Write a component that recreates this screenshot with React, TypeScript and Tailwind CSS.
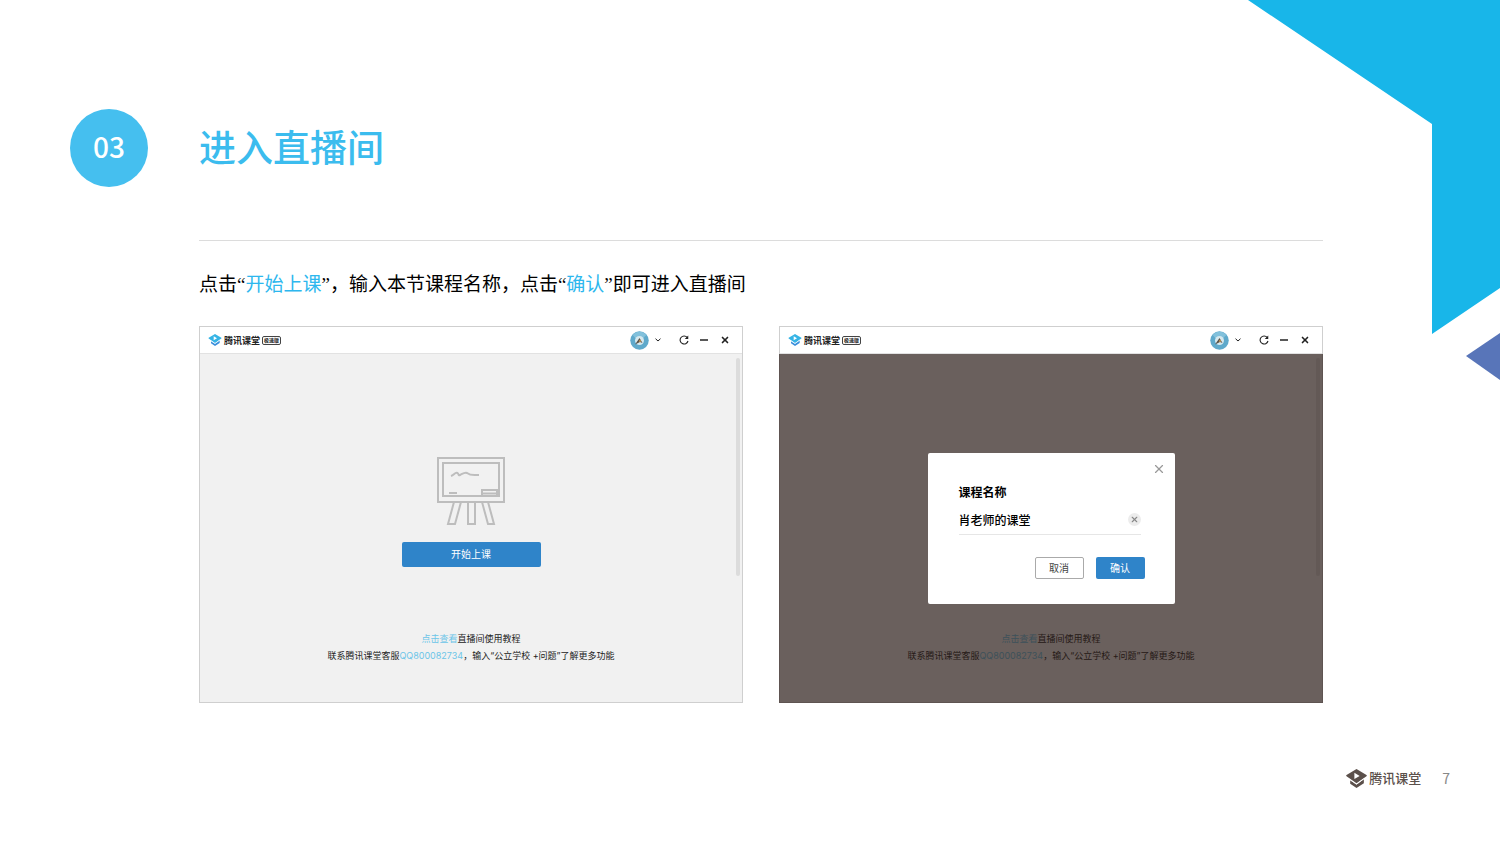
import React from "react";
import { X } from "lucide-react";

type LogoProps = {
  className?: string;
  top: string;
  bottom: string;
};

const Logo: React.FC<LogoProps> = ({ className, top, bottom }) => (
  <svg viewBox="0 0 40 36" className={className} aria-hidden="true">
    <path
      d="M20 0 L39 11.5 Q40.500 12.500 39 13.500 L20 27 L1 13.500 Q-0.500 12.500 1 11.500 Z"
      fill={top}
    />
    <path d="M16 7 L26 13 L16 19 Z" fill="#fff" />
    <path
      d="M8 21.500 L20 29.500 L34 19.500 V27 L20 36 L8 28 Z"
      fill={bottom}
    />
    <path d="M5 18.500 L20 29 L34 18.500" stroke="#fff" strokeWidth="1.500" fill="none" />
  </svg>
);

const Board: React.FC = () => (
  <svg
    viewBox="0 0 68 69"
    className="h-[69px] w-[68px] shrink-0"
    fill="none"
    stroke="#bdbdbd"
    strokeWidth="2"
    aria-hidden="true"
  >
    <rect x="1" y="1" width="66" height="44" />
    <rect x="6" y="6" width="56" height="33" />
    <path d="M14 19 C17 18 18 15 20.500 16 C22 17 21 19 23 18 C26 16.500 28 15 30 16 C34 19 36 18 42 18" />
    <path d="M12 36 H20" />
    <path d="M45 39 V33 H60 V39 M45 36.500 H60" />
    <path d="M17 45 L11 67 H18 L24 45" />
    <path d="M31 45 V67 H38 V45" />
    <path d="M45 45 L51 67 H57 L51 45" />
  </svg>
);

const Avatar: React.FC = () => (
  <svg viewBox="0 0 38 38" className="h-[19px] w-[19px]" aria-hidden="true">
    <circle cx="19" cy="19" r="18.500" fill="#5fa9cb" />
    <path d="M5 8 A18 18 0 0 1 33 8 L26 14 H11 Z" fill="#82c1dc" />
    <circle cx="19" cy="19" r="9" fill="#d5e8ee" />
    <path d="M19 14 L25 24 L20 22 L10 27 Z" fill="#5b5248" />
    <circle cx="20" cy="20" r="2" fill="#c59a55" />
  </svg>
);

const TitleBar: React.FC = () => (
  <div className="flex h-[27px] shrink-0 items-center justify-between border-b border-[#e2e2e2] bg-white pr-3 pl-2 text-[#222]">
    <div className="flex items-center gap-[2px]">
      <Logo className="h-3 w-[14px]" top="#35b4e5" bottom="#3a8fdc" />
      <span className="text-[9px] leading-none font-bold">腾讯课堂</span>
      <span className="rounded-[2px] border border-[#444] px-px text-[5px] leading-[7px] font-bold">
        极速版
      </span>
    </div>
    <div className="flex items-center">
      <button aria-label="账号" className="flex items-center gap-[6px]">
        <Avatar />
        <svg viewBox="0 0 6 4" className="h-1 w-[6px]" fill="none" stroke="currentColor" aria-hidden="true">
          <path d="M0.500 0.700 L3 3 L5.500 0.700" />
        </svg>
      </button>
      <button aria-label="刷新" className="ml-[18px]">
        <svg viewBox="0 0 20 20" className="h-[10px] w-[10px]" fill="none" aria-hidden="true">
          <path d="M16.500 5 A8 8 0 1 0 18 12" stroke="currentColor" strokeWidth="2.200" />
          <path d="M18.500 1 V8 H11.500 Z" fill="currentColor" />
        </svg>
      </button>
      <button aria-label="最小化" className="ml-[11px]">
        <svg viewBox="0 0 8 8" className="h-2 w-2" stroke="currentColor" strokeWidth="1.500" aria-hidden="true">
          <path d="M0 4 H8" />
        </svg>
      </button>
      <button aria-label="关闭" className="ml-3">
        <X size={10} strokeWidth={4} />
      </button>
    </div>
  </div>
);

const StartPage: React.FC = () => (
  <div className="flex flex-col items-center pt-[103px] pb-[38px]">
    <Board />
    <button className="mt-4 h-[25px] w-[139px] rounded-[2px] bg-[#2f84c9] text-[10px] text-white">
      开始上课
    </button>
    <div className="mt-[63px] text-center text-[9px] leading-[17px] text-[#222]">
      <p>
        <a href="#guide" className="text-[#6cc5e8]">
          点击查看
        </a>
        直播间使用教程
      </p>
      <p>
        联系腾讯课堂客服
        <a href="#qq" className="text-[#6cc5e8]">
          QQ800082734
        </a>
        ，输入“公立学校 +问题”了解更多功能
      </p>
    </div>
  </div>
);

const NameDialog: React.FC = () => (
  <div
    role="dialog"
    aria-label="课程名称"
    className="relative w-[247px] rounded-[2px] bg-white pt-[31px] pr-[30px] pb-[25px] pl-[31px] text-black"
  >
    <button aria-label="关闭" className="absolute top-[9px] right-[9px] text-[#999]">
      <X size={14} strokeWidth={2} />
    </button>
    <label htmlFor="course" className="block text-[12px] leading-[18px] font-bold">
      课程名称
    </label>
    <div className="mt-1 mr-1 flex items-center border-b border-[#e6e6e6] pb-[2px]">
      <input
        id="course"
        defaultValue="肖老师的课堂"
        className="h-[26px] min-w-0 flex-1 text-[12px] font-medium outline-none"
      />
      <button
        aria-label="清空"
        className="flex h-[13px] w-[13px] items-center justify-center rounded-full bg-[#ececec] text-[#888]"
      >
        <X size={9} strokeWidth={3} />
      </button>
    </div>
    <div className="mt-[22px] flex justify-end gap-3 text-[10px]">
      <button className="h-[22px] w-[49px] rounded-[2px] border border-[#aaa] text-[#444]">
        取消
      </button>
      <button className="h-[22px] w-[49px] rounded-[2px] bg-[#2f84c9] text-white">
        确认
      </button>
    </div>
  </div>
);

const AppWindow: React.FC<{ dialog?: boolean }> = ({ dialog }) => (
  <div className="flex flex-col border border-[#cfcfcf]">
    <TitleBar />
    <div className="relative bg-[#f1f1f1]">
      <div inert={dialog}>
        <StartPage />
      </div>
      <div className="absolute top-1 right-[2px] h-[218px] w-1 rounded-full bg-[#dcdcdc]" />
      {dialog && (
        <div className="absolute -inset-x-px top-0 -bottom-px flex items-center justify-center bg-[#271813]/67">
          <NameDialog />
        </div>
      )}
    </div>
  </div>
);

export default function App() {
  return (
    <div
      lang="zh-CN"
      className="relative flex min-h-screen flex-col overflow-hidden bg-white font-['Inter','Noto_Sans_CJK_SC',sans-serif]"
    >
      <svg
        viewBox="0 0 252 380"
        className="absolute top-0 right-0 h-[380px] w-[252px]"
        aria-hidden="true"
      >
        <path d="M0 0 H252 V288 L184 334 V124 Z" fill="#18b6e9" />
        <path d="M252 333 V380 L218 356 Z" fill="#5875b9" />
      </svg>

      <header className="relative flex items-center gap-[51px] pt-[109px] pl-[70px] font-['Noto_Sans_CJK_SC',sans-serif]">
        <span className="flex h-[78px] w-[78px] items-center justify-center rounded-full bg-[#45bfef] pb-1 text-[28px] font-medium text-white">
          03
        </span>
        <h1 className="pb-1 text-[37px] leading-none font-medium text-[#3bbcee]">
          进入直播间
        </h1>
      </header>

      <main className="relative mt-[53px] mr-[177px] ml-[199px] border-t border-[#dcdcdc]">
        <p className="mt-[30px] font-['Liberation_Serif','Noto_Sans_CJK_SC',sans-serif] text-[19px] leading-[28px] text-black">
          点击“<span className="text-[#2db7ee]">开始上课</span>
          ”，输入本节课程名称，点击“
          <span className="text-[#2db7ee]">确认</span>”即可进入直播间
        </p>
        <div className="mt-[27px] grid grid-cols-2 gap-9">
          <AppWindow />
          <AppWindow dialog />
        </div>
      </main>

      <footer className="mt-[65px] flex items-center justify-end pr-[50px] text-[#5b504b]">
        <Logo className="h-[19px] w-[21px]" top="#5b504b" bottom="#5b504b" />
        <span className="ml-[2px] text-[13px] leading-5 font-medium">腾讯课堂</span>
        <span className="ml-[21px] font-['Noto_Sans_CJK_SC',sans-serif] text-[14px] leading-5 text-[#888]">
          7
        </span>
      </footer>
    </div>
  );
}
